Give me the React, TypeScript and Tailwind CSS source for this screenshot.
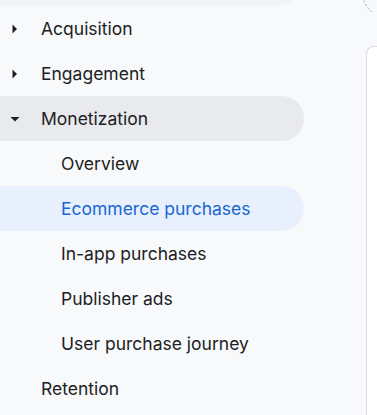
import { ReactNode } from "react";

type Item = { label: string; level: 0 | 1; arrow?: "right" | "down"; state?: "open" | "active" };

const items: Item[] = [
  { label: "Acquisition", level: 0, arrow: "right" },
  { label: "Engagement", level: 0, arrow: "right" },
  { label: "Monetization", level: 0, arrow: "down", state: "open" },
  { label: "Overview", level: 1 },
  { label: "Ecommerce purchases", level: 1, state: "active" },
  { label: "In-app purchases", level: 1 },
  { label: "Publisher ads", level: 1 },
  { label: "User purchase journey", level: 1 },
  { label: "Retention", level: 0 },
];

function Caret({ dir }: { dir: "right" | "down" }) {
  return (
    <svg width="10" height="10" viewBox="0 0 10 10" className="text-[#202124]">
      {dir === "right" ? (
        <path d="M2.5 0.5 L7 5 L2.5 9.5 Z" fill="currentColor" />
      ) : (
        <path d="M0.5 3 L9.5 3 L5 7.5 Z" fill="currentColor" />
      )}
    </svg>
  );
}

function NavRow({ item }: { item: Item }): ReactNode {
  const bg =
    item.state === "open"
      ? "bg-[#e8eaed] text-[#202124]"
      : item.state === "active"
      ? "bg-[#e8f0fe] text-[#1967d2]"
      : "text-[#202124]";
  return (
    <div className={`flex h-[45px] w-[304px] items-center rounded-r-full ${bg}`}>
      <div className="flex w-[30px] justify-center">
        {item.arrow && <Caret dir={item.arrow} />}
      </div>
      <span className={`pt-[1px] text-[17.5px] ${item.level === 1 ? "pl-[31px]" : "pl-[11px]"}`}>
        {item.label}
      </span>
    </div>
  );
}

export default function App() {
  return (
    <div
      className="flex h-[415px] w-[377px] overflow-hidden bg-[#f8f9fa]"
      style={{ fontFamily: 'Inter, "Open Sans", sans-serif' }}
    >
      <nav className="flex w-[320px] shrink-0 flex-col">
        <div className="-mt-[39px] h-[45px] w-[300px] rounded-r-full bg-[#f1f3f4]" />
        {items.map((it) => (
          <NavRow key={it.label} item={it} />
        ))}
      </nav>
      <div className="relative flex-1 pl-[46px] pt-[46px]">
        <svg className="absolute left-[40px] top-0" width="20" height="20" viewBox="0 0 20 20">
          <path
            d="M4 0.5 A 22 22 0 0 0 13 12.5"
            fill="none"
            stroke="#9aa0a6"
            strokeWidth="1"
            strokeDasharray="2 2"
          />
        </svg>
        <div className="h-full w-[40px] rounded-tl-lg border-l border-t border-[#dadce0] bg-white" />
      </div>
    </div>
  );
}
